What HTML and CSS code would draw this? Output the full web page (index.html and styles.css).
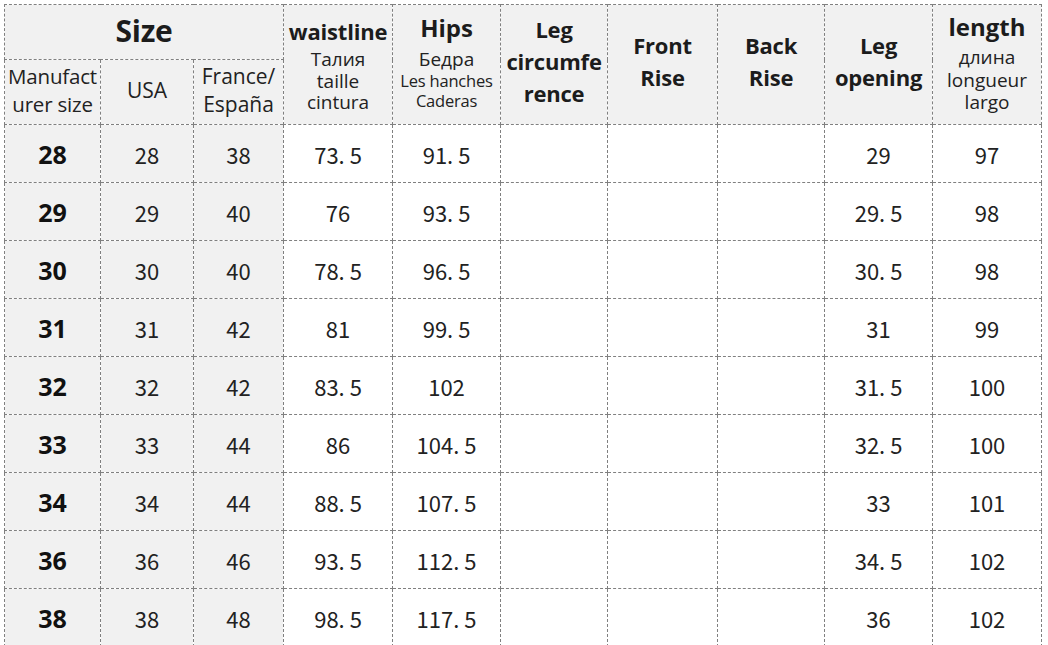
FILE: index.html
```html
<!DOCTYPE html>
<html>
<head>
<meta charset="utf-8">
<link rel="stylesheet" href="styles.css">
</head>
<body>
<table class="chart">
  <colgroup>
    <col class="c1"><col class="c2"><col class="c3"><col class="c4"><col class="c5">
    <col class="c6"><col class="c7"><col class="c8"><col class="c9"><col class="c10">
  </colgroup>
  <thead>
    <tr class="h1">
      <th colspan="3" class="gray size">Size</th>
      <th rowspan="2" class="gray multi waist"><div class="bold">waistline</div><div class="sub">Талия</div><div class="sub">taille</div><div class="sub">cintura</div></th>
      <th rowspan="2" class="gray multi hips"><div class="bold">Hips</div><div class="sub">Бедра</div><div class="sub sm">Les hanches</div><div class="sub sm">Caderas</div></th>
      <th rowspan="2" class="gray bighead">Leg<br>circumfe<br>rence</th>
      <th rowspan="2" class="gray bighead">Front<br>Rise</th>
      <th rowspan="2" class="gray bighead">Back<br>Rise</th>
      <th rowspan="2" class="gray bighead">Leg<br>opening</th>
      <th rowspan="2" class="gray multi len"><div class="bold">length</div><div class="sub">длина</div><div class="sub">longueur</div><div class="sub">largo</div></th>
    </tr>
    <tr class="h2">
      <th class="gray reg manu">Manufact<br>urer size</th>
      <th class="gray reg">USA</th>
      <th class="gray reg">France/<br>España</th>
    </tr>
  </thead>
  <tbody>
    <tr><td class="gray b">28</td><td class="gray">28</td><td class="gray">38</td><td>73. 5</td><td>91. 5</td><td></td><td></td><td></td><td>29</td><td>97</td></tr>
    <tr><td class="gray b">29</td><td class="gray">29</td><td class="gray">40</td><td>76</td><td>93. 5</td><td></td><td></td><td></td><td>29. 5</td><td>98</td></tr>
    <tr><td class="gray b">30</td><td class="gray">30</td><td class="gray">40</td><td>78. 5</td><td>96. 5</td><td></td><td></td><td></td><td>30. 5</td><td>98</td></tr>
    <tr><td class="gray b">31</td><td class="gray">31</td><td class="gray">42</td><td>81</td><td>99. 5</td><td></td><td></td><td></td><td>31</td><td>99</td></tr>
    <tr><td class="gray b">32</td><td class="gray">32</td><td class="gray">42</td><td>83. 5</td><td>102</td><td></td><td></td><td></td><td>31. 5</td><td>100</td></tr>
    <tr><td class="gray b">33</td><td class="gray">33</td><td class="gray">44</td><td>86</td><td>104. 5</td><td></td><td></td><td></td><td>32. 5</td><td>100</td></tr>
    <tr><td class="gray b">34</td><td class="gray">34</td><td class="gray">44</td><td>88. 5</td><td>107. 5</td><td></td><td></td><td></td><td>33</td><td>101</td></tr>
    <tr><td class="gray b">36</td><td class="gray">36</td><td class="gray">46</td><td>93. 5</td><td>112. 5</td><td></td><td></td><td></td><td>34. 5</td><td>102</td></tr>
    <tr><td class="gray b">38</td><td class="gray">38</td><td class="gray">48</td><td>98. 5</td><td>117. 5</td><td></td><td></td><td></td><td>36</td><td>102</td></tr>
  </tbody>
</table>
</body>
</html>
```
FILE: styles.css
```css
html, body {
  margin: 0;
  padding: 0;
  background: #ffffff;
}
body {
  padding: 4px 0 0 4px;
  font-family: "Open Sans", "Noto Sans", sans-serif;
  color: #1c1c1c;
}
.chart {
  border-collapse: collapse;
  table-layout: fixed;
  width: 1037px;
}
.c1 { width: 96px; }
.c2 { width: 93px; }
.c3 { width: 90px; }
.c4 { width: 109px; }
.c5 { width: 108px; }
.c6 { width: 107px; }
.c7 { width: 110px; }
.c8 { width: 107px; }
.c9 { width: 108px; }
.c10 { width: 109px; }
.chart th, .chart td {
  border: 1px dashed #808080;
  padding: 0;
  text-align: center;
  vertical-align: middle;
  overflow: hidden;
  white-space: nowrap;
}
.chart .gray { background: #f1f1f1; }
.h1 { height: 55px; }
.h2 { height: 65px; }
.chart th.size {
  font-size: 30px;
  font-weight: 700;
  letter-spacing: -0.2px;
  line-height: 40px;
  padding-bottom: 2px;
}
.chart th.reg {
  font-weight: 400;
  font-size: 21px;
  line-height: 28px;
  color: #222;
  padding-bottom: 4px;
}
.chart th.manu {
  font-size: 20.5px;
  letter-spacing: -0.2px;
}
.chart th.bighead {
  font-weight: 700;
  font-size: 22px;
  line-height: 32px;
  letter-spacing: -0.2px;
  padding-bottom: 8px;
}
.chart th.multi {
  font-weight: 400;
  vertical-align: top;
}
.multi .bold {
  font-weight: 700;
}
.multi .sub {
  color: #222;
}
.chart th.waist { padding-top: 9px; }
.waist .bold {
  font-size: 22px;
  letter-spacing: -0.2px;
  line-height: 35px;
}
.waist .sub {
  font-size: 19px;
  line-height: 21.5px;
}
.chart th.hips { padding-top: 3px; }
.hips .bold {
  font-size: 24px;
  line-height: 40px;
}
.hips .sub {
  font-size: 19px;
  line-height: 23px;
}
.hips .sub.sm {
  font-size: 16.5px;
  line-height: 20px;
  letter-spacing: -0.2px;
}
.chart th.len { padding-top: 3px; }
.len .bold {
  font-size: 24px;
  line-height: 38px;
}
.len .sub {
  font-size: 19px;
  line-height: 22.5px;
}
.chart tbody tr { height: 58px; }
.chart td {
  font-family: "Noto Sans CJK SC", "Noto Sans", sans-serif;
  font-size: 22px;
  color: #222;
}
.chart td.b {
  font-family: "Open Sans", "Noto Sans", sans-serif;
  font-weight: 700;
  font-size: 25px;
  color: #111;
}
```
